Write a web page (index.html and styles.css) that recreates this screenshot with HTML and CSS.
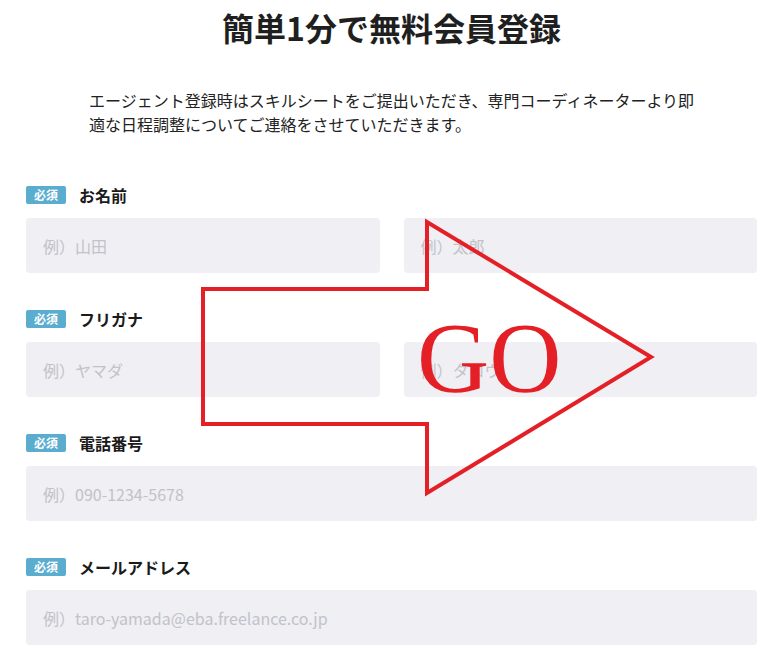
FILE: index.html
```html
<!DOCTYPE html>
<html lang="ja">
<head>
<meta charset="utf-8">
<title>簡単1分で無料会員登録</title>
<link rel="stylesheet" href="styles.css">
</head>
<body>
<main class="page">
  <h1 class="title">簡単1分で無料会員登録</h1>
  <p class="lead">エージェント登録時はスキルシートをご提出いただき、専門コーディネーターより即適な日程調整についてご連絡をさせていただきます。</p>
  <form class="form">
    <div class="field">
      <div class="label-row"><span class="badge">必須</span><span class="label">お名前</span></div>
      <div class="inputs two">
        <input class="input" type="text" placeholder="例）山田">
        <input class="input" type="text" placeholder="例）太郎">
      </div>
    </div>
    <div class="field">
      <div class="label-row"><span class="badge">必須</span><span class="label">フリガナ</span></div>
      <div class="inputs two">
        <input class="input" type="text" placeholder="例）ヤマダ">
        <input class="input" type="text" placeholder="例）タロウ">
      </div>
    </div>
    <div class="field">
      <div class="label-row"><span class="badge">必須</span><span class="label">電話番号</span></div>
      <div class="inputs">
        <input class="input" type="tel" placeholder="例）090-1234-5678">
      </div>
    </div>
    <div class="field">
      <div class="label-row"><span class="badge">必須</span><span class="label">メールアドレス</span></div>
      <div class="inputs">
        <input class="input" type="email" placeholder="例）taro-yamada@eba.freelance.co.jp">
      </div>
    </div>
  </form>
</main>
<svg class="overlay" width="783" height="648" viewBox="0 0 783 648">
  <polygon points="203,289 427,289 427,222 651,357 427,493 427,424 203,424" fill="none" stroke="#e41f26" stroke-width="4" stroke-linejoin="miter"/>
  <text x="417" y="391" class="go">GO</text>
</svg>
</body>
</html>
```

FILE: styles.css
```css
* { box-sizing: border-box; }

html, body {
  margin: 0;
  padding: 0;
  background: #ffffff;
}

body {
  font-family: "Noto Sans CJK JP", "Noto Sans", sans-serif;
  color: #222222;
  position: relative;
  overflow: hidden;
  height: 648px;
}

.page {
  padding: 0 26px;
}

.title {
  margin: 3px 0 0;
  font-size: 32px;
  line-height: 48px;
  font-weight: 700;
  text-align: center;
  color: #1f1f1f;
}

.lead {
  margin: 37px 0 0 63px;
  width: 614px;
  font-size: 16px;
  line-height: 24px;
  color: #222222;
}

.form {
  margin-top: 49px;
  display: flex;
  flex-direction: column;
  gap: 36px;
}

.field {
  display: flex;
  flex-direction: column;
  gap: 13px;
}

.label-row {
  display: flex;
  align-items: center;
  gap: 13px;
  height: 20px;
}

.badge {
  display: inline-flex;
  align-items: center;
  justify-content: center;
  width: 40px;
  height: 18px;
  background: #5aadcf;
  color: #ffffff;
  font-size: 12px;
  font-weight: 700;
  border-radius: 2px;
  line-height: 1;
}

.label {
  font-size: 16px;
  font-weight: 700;
  line-height: 20px;
  color: #1a1a1a;
}

.inputs {
  display: grid;
  grid-template-columns: 1fr;
}

.inputs.two {
  grid-template-columns: 1fr 1fr;
  gap: 24px;
}

.input {
  height: 55px;
  width: 100%;
  border: none;
  border-radius: 4px;
  background: #efeff4;
  padding: 0 17px;
  font-family: "Noto Sans CJK JP", "Noto Sans", sans-serif;
  font-size: 16px;
  color: #333;
  outline: none;
}

.input::placeholder {
  color: #c2c2c9;
}

.overlay {
  position: absolute;
  left: 0;
  top: 0;
  pointer-events: none;
}

.go {
  font-family: "Liberation Serif", "Times New Roman", serif;
  font-size: 100px;
  fill: #e41f26;
}
```
